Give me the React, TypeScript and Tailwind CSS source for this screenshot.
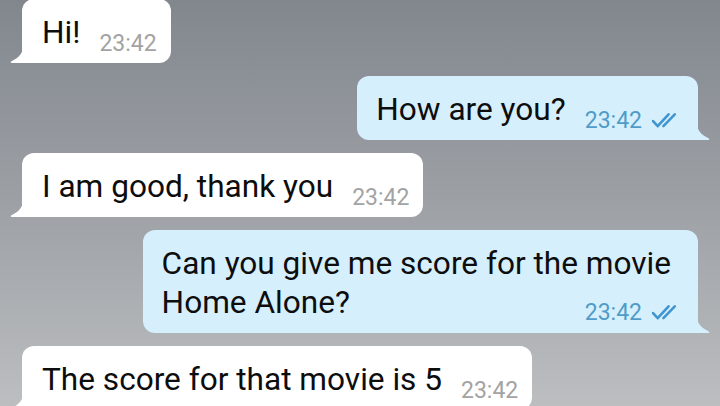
import { ReactNode } from 'react';

const Tail = ({ sent }: { sent?: boolean }) => (
  <svg
    viewBox="0 0 14 20"
    className={`absolute bottom-0 w-[14px] h-[20px] ${sent ? 'right-[-12px] -scale-x-100' : 'left-[-12px]'}`}
  >
    <path d="M14 0 C14 9 9 15 1.5 18.2 C0.2 18.8 0.4 20 1.8 20 L14 20 Z" fill={sent ? '#d6effc' : '#ffffff'} />
  </svg>
);

const Checks = () => (
  <svg viewBox="0 0 30 16" className="ml-[9px] w-[31px] h-[17px]" fill="none" stroke="#4096cf" strokeWidth="2.5" strokeLinecap="round" strokeLinejoin="round">
    <path d="M2 8.5 L6.5 13.5 L17 2" />
    <path d="M12 13.5 L23 2" />
  </svg>
);

interface BubbleProps {
  sent?: boolean;
  multiline?: boolean;
  children: ReactNode;
}

const Time = ({ sent }: { sent?: boolean }) => (
  <span className="flex items-center">
    <span className={`text-[23px] leading-[23px] ${sent ? 'text-[#4f9cc8]' : 'text-[#a3a3a3]'}`}>23:42</span>
    {sent && <Checks />}
  </span>
);

const Bubble = ({ sent, multiline, children }: BubbleProps) => {
  const side = sent
    ? 'self-end bg-[#d6effc] rounded-br-none pl-[19px]'
    : 'self-start bg-white rounded-bl-none pr-[14px] pl-[20px]';

  if (multiline) {
    return (
      <div className={`relative rounded-[12px] pt-[14px] pb-[9px] pr-[27px] ${side}`}>
        <div className="text-[31.6px] leading-[39px] text-[#0d0d0d]">{children}</div>
        <div className="flex justify-end mt-[-21px] mr-[-11px]">
          <Time sent={sent} />
        </div>
        <Tail sent={sent} />
      </div>
    );
  }

  return (
    <div className={`relative flex items-start rounded-[12px] pt-[14px] pb-[8px] ${sent ? 'pr-[16px]' : ''} ${side}`}>
      <span className="text-[31.6px] leading-[39px] text-[#0d0d0d]">{children}</span>
      <span className="ml-[19px] mt-[19px]">
        <Time sent={sent} />
      </span>
      <Tail sent={sent} />
    </div>
  );
};

export default function App() {
  return (
    <div
      className="w-[720px] h-[406px] overflow-hidden bg-gradient-to-b from-[#82878e] via-[#9da1a6] to-[#bcbec0]"
      style={{ fontFamily: 'Roboto, "Noto Sans", sans-serif' }}
    >
      <div className="flex flex-col gap-[13px] px-[22px] mt-[-1px]">
        <Bubble>Hi!</Bubble>
        <Bubble sent>How are you?</Bubble>
        <Bubble>I am good, thank you</Bubble>
        <Bubble sent multiline>
          Can you give me score for the movie
          <br />
          Home Alone?
        </Bubble>
        <Bubble>The score for that movie is 5</Bubble>
      </div>
    </div>
  );
}
